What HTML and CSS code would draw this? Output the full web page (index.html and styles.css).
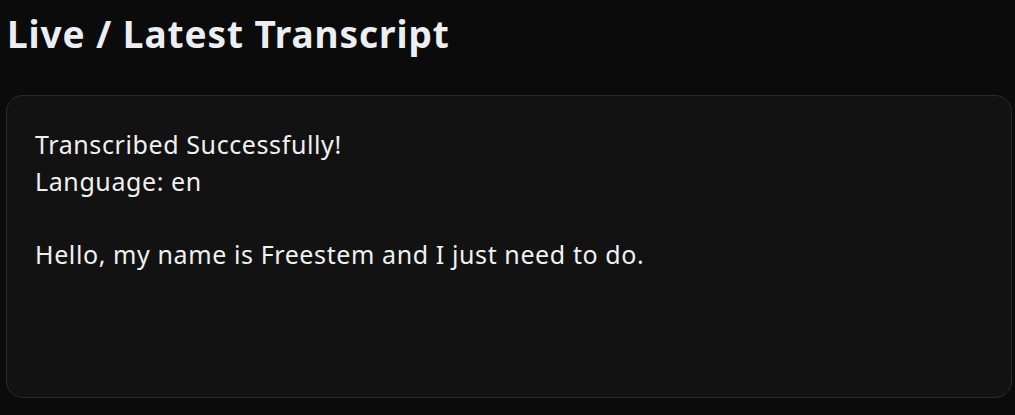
FILE: index.html
```html
<!DOCTYPE html>
<html lang="en">
<head>
<meta charset="utf-8">
<title>Live / Latest Transcript</title>
<link rel="stylesheet" href="styles.css">
</head>
<body>
<main class="page">
  <h1 class="title">Live / Latest Transcript</h1>
  <section class="card">
    <div class="transcript">Transcribed Successfully!
Language: en

Hello, my name is Freestem and I just need to do.</div>
  </section>
</main>
</body>
</html>
```

FILE: styles.css
```css
html, body {
  margin: 0;
  padding: 0;
  background: #0b0b0b;
  height: 100%;
}

body {
  font-family: "Segoe UI", "Noto Sans", "Open Sans", sans-serif;
  color: #ececec;
}

.page {
  padding: 0 3px 0 6px;
  display: flex;
  flex-direction: column;
}

.title {
  margin: 10px 0 0 1px;
  font-size: 37px;
  font-weight: 700;
  line-height: 48px;
  color: #eceef2;
  letter-spacing: 0.9px;
}

.card {
  margin-top: 37px;
  box-sizing: border-box;
  height: 303px;
  background: #121212;
  border: 1px solid #2b2b2b;
  border-radius: 17px;
  padding: 30px 28px;
}

.transcript {
  white-space: pre-wrap;
  font-size: 25px;
  line-height: 36.5px;
  color: #f0f0f0;
  letter-spacing: 0.6px;
}
```
